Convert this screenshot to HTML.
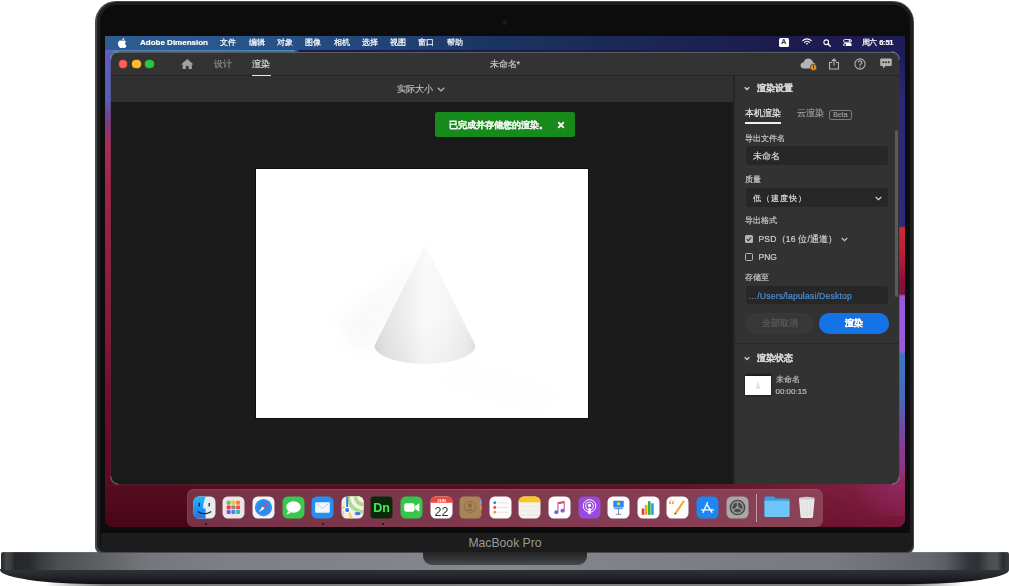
<!DOCTYPE html>
<html><head><meta charset="utf-8">
<style>
*{margin:0;padding:0;box-sizing:border-box}
html,body{width:1009px;height:586px;overflow:hidden;background:#fff;font-family:"Liberation Sans",sans-serif;font-weight:500}
.a{position:absolute}
#lid{left:95px;top:1px;width:819px;height:552px;border-radius:21px 21px 6px 6px;background:#46484b}
#bez{left:99.5px;top:5px;width:810px;height:544px;border-radius:17px 17px 4px 4px;background:#0c0c0c;box-shadow:0 0 0 3px #1e1e1e}
#chin{left:100.5px;top:533px;width:809px;height:18.5px;background:#1c1c1c;border-radius:0 0 6px 6px}
#screen{will-change:transform;-webkit-text-stroke:0.2px;left:105px;top:36px;width:800px;height:491px;background:#3a1a40;overflow:hidden;border-radius:0 0 8px 8px}
#menubar{left:0;top:0;width:800px;height:14px;background:linear-gradient(90deg,#2d5d92 0,#2b5890 100px,#254e84 200px,#1e3c6c 345px,#1b3662 375px,#1b2a58 500px,#1c1c4c 675px,#1e1c58 800px);color:#fff;font-size:8px;line-height:14px}
#win{left:6px;top:16px;width:788px;height:432px;background:#1b1b1b;border-radius:7px;overflow:hidden;box-shadow:0 0 0 0.5px rgba(60,60,70,.6)}
#title{left:0;top:0;width:788px;height:24px;background:#333;border-bottom:1px solid #252525;box-shadow:inset 0 1px 0 rgba(255,255,255,.2)}
#toolbar{left:0;top:24px;width:622px;height:26px;background:#303030}
#canvas{left:0;top:50px;width:622px;height:382px;background:#1a1a1a}
#divider{left:622px;top:24px;width:1.5px;height:408px;background:#262626}
#panel{left:623.5px;top:24px;width:164.5px;height:408px;background:#323232}
#dock{left:82px;top:453px;width:635.5px;height:38px;background:linear-gradient(90deg,#753247,#80394f 50%,#8a4257);border-radius:7px;box-shadow:inset 0 1px 0 rgba(255,200,210,.12),inset 1px 0 0 rgba(255,200,210,.08)}
#base1{left:1px;top:552px;width:1008px;height:18px;box-shadow:inset 0 1px 0 rgba(255,255,255,.1);border-radius:2px 2px 0 0;background:linear-gradient(90deg,#2a2d30 0,#34373a 3px,#45484b 6px,#3a3d40 10px,#25282b 14px,#282b2e 28px,#3a3d40 40px,#4e5154 60px,#5a5d60 90px,#686b6e 120px,#74787c 148px,#7c8084 220px,#85898d 500px,#7b7f83 700px,#777b7f 830px,#6a6e72 900px,#64686c 930px,#5a5e62 945px,#45484c 957px,#33363a 967px,#2e3134 977px,#4a4d50 988px,#505356 996px,#2a2d30 1002px,#3a3d40 1008px)}
#base2{left:0;top:569px;width:1009px;height:14.5px;background:linear-gradient(#30353a,#22262a 50%,#0e1012);border-radius:0 0 100px 100px/0 0 14px 14px}
#shadow{left:45px;top:582px;width:919px;height:4px;background:linear-gradient(90deg,rgba(110,110,110,0),#7a7a7a 60px,#808080 50%,#7a7a7a 859px,rgba(110,110,110,0))}
#notch{left:422.5px;top:552px;width:164px;height:12.5px;background:linear-gradient(#222426,#35373a 60%,#4a4c4f);border-radius:0 0 9px 9px}
#mbp{left:430px;top:536px;width:150px;text-align:center;color:#9a9a9a;font-size:12.2px;line-height:14px}
.mt{top:3px;font-size:8px;line-height:8px;color:#fff;white-space:nowrap}
.b{font-weight:bold}
.tt{top:7.5px;font-size:9px;line-height:9px;white-space:nowrap}
.pt{font-size:9px;line-height:9px;white-space:nowrap}
.lb{font-size:7.5px;line-height:7.5px;color:#c4c4c4;white-space:nowrap}
.inp{left:635px;width:142px;height:19.5px;background:#272727;border-radius:3px}
</style></head><body>
<div id="shadow" class="a"></div>
<div id="base2" class="a"></div>
<div id="base1" class="a"></div>
<div id="lid" class="a"></div>
<div id="bez" class="a"></div>
<div id="chin" class="a"></div>
<div class="a" style="left:502.5px;top:20px;width:4.5px;height:4.5px;border-radius:50%;background:#1c1c1e"></div>
<div id="notch" class="a"></div>
<div id="mbp" class="a">MacBook Pro</div>
<div id="screen" class="a">
  <div class="a" style="left:0;top:14px;width:800px;height:3px;background:linear-gradient(90deg,#5a62bc 0,#5a62bc 6px,#4a80b8 8px,#3d8cc4 185px,#36a0d0 188px,#15154a 195px,#1c1c55 100%)"></div>
  <div class="a" style="left:0;top:16px;width:12px;height:475px;background:linear-gradient(#5a60bc 0,#585cb4 48px,#6a4a98 60px,#843a78 73px,#aa2c58 93px,#a82248 133px,#881636 283px,#700c2c 348px,#600822 433px,#54081c 475px)"></div>
  <div class="a" style="left:788px;top:16px;width:12px;height:475px;background:linear-gradient(#1c1c58 0,#2a2a78 48px,#2c2a7a 174px,#d02a32 176px,#b01c3a 208px,#8a1038 230px,#7a1040 242px,#9a58d8 244px,#9a5ad8 300px,#3a78c0 302px,#4a68b8 348px,#6a50b0 368px,#8a3a90 398px,#9a2a70 438px,#8a1a40 460px,#7a1535 475px)"></div>
  <div class="a" style="left:0;top:440px;width:800px;height:51px;background:linear-gradient(rgba(255,255,255,.04),rgba(0,0,0,.12)),linear-gradient(90deg,#52061a 0,#520619 300px,#620c22 600px,#7a1636 720px,#84183e 800px)"></div>
  <div class="a" style="left:740px;top:440px;width:60px;height:40px;background:radial-gradient(circle at 100% 0,rgba(150,45,110,.8),rgba(150,45,110,0) 75%)"></div>
  <div id="menubar" class="a">
    <svg class="a" style="left:13px;top:2px" width="9" height="10" viewBox="0 0 18 20"><path fill="#fff" d="M12.6 0c.1 1.3-.4 2.5-1.1 3.4-.8.9-1.9 1.5-3.1 1.4-.1-1.2.4-2.5 1.1-3.3C10.3.6 11.6 0 12.6 0zM16.5 6.9c-.2.1-2.3 1.3-2.2 3.9 0 3 2.6 4 2.7 4.1-.1.1-.4 1.4-1.4 2.9-.9 1.3-1.8 2.5-3.2 2.5-1.4 0-1.8-.8-3.4-.8-1.6 0-2.1.8-3.4.9-1.3 0-2.4-1.4-3.3-2.7C.5 15.100-.9 10.600.9 7.500c.9-1.5 2.500-2.500 4.200-2.500 1.300 0 2.600.9 3.400.9.8 0 2.100-1.100 3.600-.9.600 0 2.400.200 3.500 1.800z"/></svg>
    <div class="a mt b" style="left:35px;font-size:8px">Adobe Dimension</div>
    <div class="a mt" style="left:115px">文件</div>
    <div class="a mt" style="left:143.5px">编辑</div>
    <div class="a mt" style="left:171.5px">对象</div>
    <div class="a mt" style="left:200px">图像</div>
    <div class="a mt" style="left:228.5px">相机</div>
    <div class="a mt" style="left:256.5px">选择</div>
    <div class="a mt" style="left:285px">视图</div>
    <div class="a mt" style="left:313px">窗口</div>
    <div class="a mt" style="left:341.5px">帮助</div>
    <div class="a" style="left:674px;top:2px;width:9.5px;height:8.5px;background:#fff;border-radius:1.5px;color:#40405a;font-size:7px;font-weight:bold;line-height:8.5px;text-align:center">A</div>
    <svg class="a" style="left:696.5px;top:2px" width="10" height="7" viewBox="0 0 20 14"><path fill="none" stroke="#fff" stroke-width="2.300" stroke-linecap="round" d="M1.500 5.200a12.500 12.500 0 0 1 17 0M5 8.700a7.500 7.500 0 0 1 10 0"/><path d="M7.600 11.200a3.600 3.600 0 0 1 4.800 0L10 13.600z" fill="#fff"/></svg>
    <svg class="a" style="left:718px;top:3px" width="8" height="8" viewBox="0 0 16 16"><circle cx="6.5" cy="6.5" r="4.7" fill="none" stroke="#fff" stroke-width="2.2"/><path d="M10 10l4.5 4.5" stroke="#fff" stroke-width="2.4" stroke-linecap="round"/></svg>
    <svg class="a" style="left:737.5px;top:2.5px" width="9" height="7.500" viewBox="0 0 18 15"><rect x="1" y="1" width="16" height="5.600" rx="2.800" fill="none" stroke="#fff" stroke-width="1.700"/><circle cx="13.200" cy="3.800" r="1.900" fill="#fff"/><rect x="0.500" y="8.200" width="17" height="6.300" rx="3.150" fill="#fff"/><circle cx="4.300" cy="11.350" r="1.900" fill="#1e1c58"/></svg>
    <div class="a mt" style="left:756.5px;letter-spacing:-0.2px">周六 <span class="b" style="font-size:7.5px">6:51</span></div>
  </div>
  <div id="win" class="a">
    <div id="title" class="a">
      <div class="a" style="left:7.9px;top:7.8px;width:8.4px;height:8.4px;border-radius:50%;background:#fe5f57;box-shadow:0 0 0 .5px #9a3a36"></div>
      <div class="a" style="left:21.3px;top:7.8px;width:8.4px;height:8.4px;border-radius:50%;background:#febc2e;box-shadow:0 0 0 .5px #9a7020"></div>
      <div class="a" style="left:34.2px;top:7.8px;width:8.4px;height:8.4px;border-radius:50%;background:#28c840;box-shadow:0 0 0 .5px #1a7a2a"></div>
      <svg class="a" style="left:69.5px;top:6.8px" width="12.5" height="10" viewBox="0 0 25 20"><path fill="#a0a0a0" d="M12.5 0L0 10.8h3.3V20h6.5v-6.2h5.4V20h6.5v-9.2H25z"/></svg>
      <div class="a tt" style="left:102.5px;color:#8c8c8c">设计</div>
      <div class="a tt" style="left:141px;color:#dcdcdc">渲染</div>
      <div class="a tt" style="left:378.5px;color:#c8c8c8">未命名*</div>
      <svg class="a" style="left:689px;top:6px" width="18" height="13" viewBox="0 0 36 26"><path fill="#b4b4b4" d="M8 21C3.5 21 1 18 1 14.5S3.8 8.300 7.200 8.300C8.500 3.600 12.300 1 16.500 1c5 0 8.800 3.500 9.300 8.200 3.300.3 5.700 2.800 5.700 6 0 3.300-2.700 5.800-6 5.800z"/><circle cx="27" cy="19" r="6.5" fill="#f29423" stroke="#333" stroke-width="1.5"/><rect x="26" y="14.8" width="2" height="5.2" fill="#333"/><rect x="26" y="21.3" width="2" height="1.8" fill="#333"/></svg>
      <svg class="a" style="left:717px;top:5.5px" width="12" height="12" viewBox="0 0 24 24"><path fill="none" stroke="#b4b4b4" stroke-width="2.2" d="M8 9H3v13h18V9h-5M12 15V2M7.5 6.5L12 2l4.5 4.5"/></svg>
      <svg class="a" style="left:743px;top:6px" width="12" height="12" viewBox="0 0 24 24"><circle cx="12" cy="12" r="10.2" fill="none" stroke="#b4b4b4" stroke-width="2.2"/><path fill="none" stroke="#b4b4b4" stroke-width="2.4" d="M8.6 9.2a3.4 3.4 0 1 1 4.600 3.200c-.8.400-1.200 1-1.200 2v.8"/><circle cx="12" cy="18" r="1.4" fill="#b4b4b4"/></svg>
      <svg class="a" style="left:768.5px;top:6px" width="12" height="11" viewBox="0 0 24 22"><path fill="#b4b4b4" d="M2 1h20a1.500 1.500 0 0 1 1.500 1.500v12A1.500 1.500 0 0 1 22 16H11l-5 5v-5H2A1.500 1.500 0 0 1 .5 14.500v-12A1.500 1.500 0 0 1 2 1z"/><circle cx="6.5" cy="8.500" r="2" fill="#333"/><circle cx="12" cy="8.500" r="2" fill="#333"/><circle cx="17.500" cy="8.500" r="2" fill="#333"/></svg>
    </div>
    <div class="a" style="left:141px;top:23px;width:19px;height:2px;background:#e6e6e6"></div>
    <div id="toolbar" class="a">
      <div class="a" style="left:286px;top:8.5px;font-size:9px;line-height:9px;color:#bcbcbc;white-space:nowrap">实际大小</div>
      <svg class="a" style="left:325.5px;top:10.5px" width="8" height="5" viewBox="0 0 16 10"><path d="M1.500 1.500L8 8l6.500-6.500" fill="none" stroke="#bcbcbc" stroke-width="2.200"/></svg>
    </div>
    <div id="canvas" class="a"><div class="a" style="left:83px;top:56px;width:411px;height:326px;background:#1b1b1b"></div></div>
    <svg class="a" style="left:144px;top:116px" width="334" height="251" viewBox="0 0 334 251">
      <defs>
        <linearGradient id="cg" x1="0" x2="1" y1="0" y2="0"><stop offset="0" stop-color="#d8d8d8"/><stop offset="0.1" stop-color="#e4e4e4"/><stop offset="0.3" stop-color="#eeeeee"/><stop offset="0.5" stop-color="#fafafa"/><stop offset="0.7" stop-color="#f6f6f6"/><stop offset="0.9" stop-color="#eeeeee"/><stop offset="1" stop-color="#e2e2e2"/></linearGradient><linearGradient id="cv" x1="0" x2="0" y1="0" y2="1"><stop offset="0.6" stop-color="#000" stop-opacity="0"/><stop offset="1" stop-color="#000" stop-opacity="0.03"/></linearGradient>
        <radialGradient id="sh1" cx="0.5" cy="0.5" r="0.5"><stop offset="0" stop-color="#000" stop-opacity="0.06"/><stop offset="1" stop-color="#000" stop-opacity="0"/></radialGradient>
        <filter id="bl" x="-50%" y="-50%" width="200%" height="200%"><feGaussianBlur stdDeviation="7"/></filter>
      </defs>
      <rect x="0" y="0" width="334" height="251" fill="#0f0f0f"/>
      <rect x="1" y="1" width="332" height="249" fill="#fff"/>
      <g filter="url(#bl)" opacity="0.1"><path d="M166 88 L85 150 L92 178 L122 180 Z" fill="#c8c8c8"/><path d="M205 200 L300 225 L285 240 L190 212 Z" fill="#e8e8e8"/></g>
      <path d="M170 77 L119.500 177.500 A50.500 18.500 0 0 0 220.500 177.500 Z" fill="url(#cg)"/><path d="M170 77 L119.500 177.500 A50.500 18.500 0 0 0 220.500 177.500 Z" fill="url(#cv)"/>
    </svg>
    <div class="a" style="left:324px;top:59.7px;width:140px;height:25.7px;background:#178a1b;border-radius:2.5px">
      <div class="a" style="left:13.5px;top:9.5px;font-size:8.8px;line-height:8.8px;color:#eef7ee;white-space:nowrap;font-weight:700">已完成并存储您的渲染。</div>
      <svg class="a" style="left:122px;top:9.2px" width="8" height="8" viewBox="0 0 16 16"><path d="M2.500 2.500l11 11M13.500 2.500l-11 11" stroke="#f4f4f4" stroke-width="3.600"/></svg>
    </div>
    <div id="divider" class="a"></div>
    <div id="panel" class="a"></div>
    <div class="a" style="left:784px;top:78px;width:3px;height:167px;background:#5a5a5a;border-radius:1.5px"></div>
    <svg class="a" style="left:633px;top:34px" width="6" height="5" viewBox="0 0 12 10"><path d="M1.500 2.500L6 7l4.500-4.500" fill="none" stroke="#d0d0d0" stroke-width="2.700"/></svg>
    <div class="a pt b" style="left:645.5px;top:32px;color:#d4d4d4">渲染设置</div>
    <div class="a pt" style="left:634px;top:57px;color:#ececec">本机渲染</div>
    <div class="a" style="left:634px;top:70px;width:36px;height:2px;background:#efefef"></div>
    <div class="a pt" style="left:686px;top:57px;color:#9a9a9a">云渲染</div>
    <div class="a" style="left:718px;top:57.5px;width:23px;height:10px;border:1px solid #7a7a7a;border-radius:2px;color:#9a9a9a;font-size:7px;line-height:8px;text-align:center">Beta</div>
    <div class="a lb" style="left:633.5px;top:82.5px">导出文件名</div>
    <div class="a inp" style="top:93.5px"><div class="a" style="left:7px;top:6px;font-size:9px;line-height:9px;color:#d8d8d8">未命名</div></div>
    <div class="a lb" style="left:633.5px;top:124px">质量</div>
    <div class="a inp" style="top:135.5px"><div class="a" style="left:7px;top:6.8px;font-size:8.3px;line-height:8.3px;color:#d8d8d8;white-space:nowrap;letter-spacing:1.1px">低（速度快）</div>
      <svg class="a" style="left:128.5px;top:8.5px" width="7" height="5" viewBox="0 0 14 10"><path d="M1.500 2L7 7.500 12.500 2" fill="none" stroke="#d8d8d8" stroke-width="2.200"/></svg></div>
    <div class="a lb" style="left:633.5px;top:165px">导出格式</div>
    <div class="a" style="left:634px;top:182.5px;width:8px;height:8px;background:#b4b4b4;border-radius:1.5px"></div>
    <svg class="a" style="left:634px;top:182.5px" width="8" height="8" viewBox="0 0 16 16"><path d="M3.500 8.200l3 3 6-6.500" fill="none" stroke="#323232" stroke-width="2.200"/></svg>
    <div class="a" style="left:647.5px;top:183px;font-size:8.5px;line-height:8.5px;color:#cfcfcf;white-space:nowrap;letter-spacing:0.2px">PSD（16 位/通道）</div>
    <svg class="a" style="left:730px;top:185px" width="7" height="5" viewBox="0 0 14 10"><path d="M1.500 2L7 7.500 12.500 2" fill="none" stroke="#c8c8c8" stroke-width="2.200"/></svg>
    <div class="a" style="left:634px;top:200.5px;width:8px;height:8px;border:1.3px solid #b4b4b4;border-radius:1.5px"></div>
    <div class="a" style="left:647.5px;top:200.5px;font-size:8.5px;line-height:8.5px;color:#cfcfcf">PNG</div>
    <div class="a lb" style="left:633.5px;top:222px">存储至</div>
    <div class="a inp" style="top:234px;height:17.5px"><div class="a" style="left:2.5px;top:5.5px;font-size:8.6px;line-height:8.6px;color:#4a90d9;white-space:nowrap;letter-spacing:0.19px"><span style="color:#8a8a8a">…</span>/Users/lapulasi/Desktop</div></div>
    <div class="a" style="left:634px;top:261px;width:69px;height:20.5px;border-radius:10px;background:#383838;color:#5c5c5c;font-size:8.6px;line-height:20.5px;text-align:center">全部取消</div>
    <div class="a" style="left:708px;top:261px;width:70px;height:20.5px;border-radius:10px;background:#1473e6;color:#fff;font-size:8.6px;line-height:21.5px;text-align:center;font-weight:bold">渲染</div>
    <div class="a" style="left:624px;top:291px;width:164px;height:1px;background:#272727"></div>
    <svg class="a" style="left:633px;top:304px" width="6" height="5" viewBox="0 0 12 10"><path d="M1.500 2.500L6 7l4.500-4.500" fill="none" stroke="#d0d0d0" stroke-width="2.700"/></svg>
    <div class="a pt b" style="left:645.5px;top:301.5px;color:#d4d4d4">渲染状态</div>
    <div class="a" style="left:634px;top:321.5px;width:26px;height:21.5px;background:#fff;border-top:2px solid #1e1e1e;box-shadow:0 1px 2px rgba(0,0,0,.5)"></div>
    <svg class="a" style="left:642px;top:327px" width="10" height="12" viewBox="0 0 10 12"><path d="M5 2L2.500 10h5z" fill="#e4e4e4"/></svg>
    <div class="a" style="left:664.5px;top:324px;font-size:7.7px;line-height:7.7px;color:#bcbcbc">未命名</div>
    <div class="a" style="left:664.5px;top:335.5px;font-size:8px;line-height:8px;color:#bcbcbc">00:00:15</div>
  </div>
  <svg class="a" style="left:0;top:0" width="800" height="491"><path d="M5.800 440.500A7.500 7.500 0 0 0 13.300 448.200M786.700 448.200A7.500 7.500 0 0 0 794.200 440.500M5.800 23.500A7.500 7.500 0 0 1 13.300 15.800M786.700 15.800A7.500 7.500 0 0 1 794.200 23.500" fill="none" stroke="rgba(255,255,255,.4)" stroke-width="1"/></svg>
  <div id="dock" class="a"><svg class="a" style="left:5.7px;top:6.8px" width="23" height="23" viewBox="0 0 44 44"><defs><clipPath id="fc"><rect x="1" y="1" width="42" height="42" rx="10"/></clipPath></defs><g clip-path="url(#fc)"><rect x="0" y="0" width="44" height="44" fill="#e6ebf0"/><defs><linearGradient id="fg" x1="0" y1="0" x2="0" y2="1"><stop offset="0" stop-color="#22b8f8"/><stop offset="1" stop-color="#1a74e8"/></linearGradient></defs><path d="M0 0h25c-4 8-6 16-5.500 24H24v20H0z" fill="url(#fg)"/><path d="M12 14v5M31 14v5" stroke="#1a1a2a" stroke-width="2.400" stroke-linecap="round"/><path d="M10 30c7 5 17 5 24 0" fill="none" stroke="#1a1a2a" stroke-width="2.200" stroke-linecap="round"/></g></svg><svg class="a" style="left:35.3px;top:6.8px" width="23" height="23" viewBox="0 0 44 44"><rect x="1" y="1" width="42" height="42" rx="10" fill="#ece4e6"/><rect x="9" y="9" width="7.500" height="7.500" rx="1.800" fill="#5ac85a"/><rect x="18" y="9" width="7.500" height="7.500" rx="1.800" fill="#f5c030"/><rect x="27" y="9" width="7.500" height="7.500" rx="1.800" fill="#f08a30"/><rect x="9" y="18" width="7.500" height="7.500" rx="1.800" fill="#e04040"/><rect x="18" y="18" width="7.500" height="7.500" rx="1.800" fill="#8a8a8a"/><rect x="27" y="18" width="7.500" height="7.500" rx="1.800" fill="#f04a6a"/><rect x="9" y="27" width="7.500" height="7.500" rx="1.800" fill="#8a4ae0"/><rect x="18" y="27" width="7.500" height="7.500" rx="1.800" fill="#3a8af0"/><rect x="27" y="27" width="7.500" height="7.500" rx="1.800" fill="#30c0a0"/></svg><svg class="a" style="left:64.9px;top:6.8px" width="23" height="23" viewBox="0 0 44 44"><rect x="1" y="1" width="42" height="42" rx="10" fill="#f4f4f6"/><circle cx="22" cy="22" r="16.500" fill="#2a8af0"/><circle cx="22" cy="22" r="14" fill="none" stroke="#fff" stroke-width="0.800" stroke-dasharray="1 2" opacity="0.7"/><path d="M31 13L24 24 20 20z" fill="#f04040"/><path d="M13 31L20 20 24 24z" fill="#fff"/></svg><svg class="a" style="left:94.5px;top:6.8px" width="23" height="23" viewBox="0 0 44 44"><rect x="1" y="1" width="42" height="42" rx="10" fill="#3cc84e"/><ellipse cx="22" cy="21" rx="14" ry="11" fill="#fff"/><path d="M11 29c0 3-2 5-3 6 4 0 7-2 9-4z" fill="#fff"/></svg><svg class="a" style="left:124.1px;top:6.8px" width="23" height="23" viewBox="0 0 44 44"><rect x="1" y="1" width="42" height="42" rx="10" fill="#2490f2"/><rect x="8" y="12" width="28" height="20" rx="2" fill="#f2f6fa"/><path d="M8.500 13L22 24 35.500 13" fill="none" stroke="#b8c8d8" stroke-width="1.600"/></svg><svg class="a" style="left:153.7px;top:6.8px" width="23" height="23" viewBox="0 0 44 44"><defs><clipPath id="mc"><rect x="1" y="1" width="42" height="42" rx="10"/></clipPath></defs><g clip-path="url(#mc)"><rect width="44" height="44" fill="#f2eee6"/><circle cx="44" cy="0" r="34" fill="#a8dc88"/><circle cx="44" cy="0" r="27" fill="#f4f2ea"/><circle cx="44" cy="0" r="20" fill="#a8dc88"/><circle cx="44" cy="0" r="13" fill="#f4f2ea"/><path d="M0 20c10 2 16 8 20 24" fill="none" stroke="#f5d040" stroke-width="4"/><path d="M0 30h10M4 30v14" stroke="#f4c0c8" stroke-width="3"/><rect x="10" y="0" width="3.500" height="26" fill="#2a7af0"/><circle cx="11.800" cy="27" r="5" fill="#2a7af0" stroke="#fff" stroke-width="2.200"/><rect x="26" y="30" width="12" height="7" rx="3.500" fill="#3a78e0" stroke="#fff" stroke-width="1"/></g></svg><svg class="a" style="left:183.3px;top:6.8px" width="23" height="23" viewBox="0 0 44 44"><rect x="1" y="1" width="42" height="42" rx="6" fill="#0b2a0c"/><text x="22" y="31" text-anchor="middle" font-family="Liberation Sans" font-weight="bold" font-size="24" fill="#46ec5e">Dn</text></svg><svg class="a" style="left:212.9px;top:6.8px" width="23" height="23" viewBox="0 0 44 44"><rect x="1" y="1" width="42" height="42" rx="10" fill="#34c84a"/><rect x="8" y="14" width="20" height="16" rx="4" fill="#fff"/><path d="M29 19l8-5v16l-8-5z" fill="#fff"/></svg><svg class="a" style="left:242.5px;top:6.8px" width="23" height="23" viewBox="0 0 44 44"><rect x="1" y="1" width="42" height="42" rx="10" fill="#fff"/><path d="M1 11V10a9 9 0 0 1 9-9h24a9 9 0 0 1 9 9v1z" fill="#f04a40"/><rect x="1" y="9" width="42" height="4" fill="#f04a40"/><text x="22" y="11" text-anchor="middle" font-family="Liberation Sans" font-size="8" font-weight="bold" fill="#fff">JUN</text><text x="22" y="39" text-anchor="middle" font-family="Liberation Sans" font-size="24" fill="#333">22</text></svg><svg class="a" style="left:272.1px;top:6.8px" width="23" height="23" viewBox="0 0 44 44"><rect x="1" y="1" width="42" height="42" rx="8" fill="#a88458"/><rect x="40" y="8" width="3" height="8" fill="#8aa0d0"/><rect x="40" y="18" width="3" height="8" fill="#e0a040"/><circle cx="21" cy="21" r="11" fill="none" stroke="#8a6a40" stroke-width="1.500"/><circle cx="21" cy="18" r="4" fill="#8a6a40"/><path d="M14 28c2-4 12-4 14 0" fill="#8a6a40"/></svg><svg class="a" style="left:301.7px;top:6.8px" width="23" height="23" viewBox="0 0 44 44"><rect x="1" y="1" width="42" height="42" rx="10" fill="#fcfcfc"/><circle cx="11" cy="13" r="2.800" fill="#2a8af0"/><circle cx="11" cy="22" r="2.800" fill="#f04a3a"/><circle cx="11" cy="31" r="2.800" fill="#f0a030"/><path d="M17 13h20M17 22h20M17 31h20" stroke="#d8d8d8" stroke-width="1.300"/></svg><svg class="a" style="left:331.3px;top:6.8px" width="23" height="23" viewBox="0 0 44 44"><defs><clipPath id="nc"><rect x="1" y="1" width="42" height="42" rx="10"/></clipPath></defs><g clip-path="url(#nc)"><rect width="44" height="44" fill="#f4f2ea"/><rect width="44" height="12" fill="#f8c820"/><path d="M4 20h36M4 28h36M4 36h36" stroke="#ddd" stroke-width="0.800"/></g></svg><svg class="a" style="left:360.9px;top:6.8px" width="23" height="23" viewBox="0 0 44 44"><rect x="1" y="1" width="42" height="42" rx="10" fill="#fff"/><defs><linearGradient id="mg" x1="0" y1="0" x2="0" y2="1"><stop offset="0" stop-color="#f04a5a"/><stop offset="1" stop-color="#7a5af0"/></linearGradient></defs><path d="M18 12l14-3v19a4 3.500 0 1 1-2-3V14l-10 2v15a4 3.500 0 1 1-2-3z" fill="url(#mg)"/></svg><svg class="a" style="left:390.5px;top:6.8px" width="23" height="23" viewBox="0 0 44 44"><rect x="1" y="1" width="42" height="42" rx="10" fill="#9a4ae0"/><circle cx="22" cy="19" r="12" fill="none" stroke="#fff" stroke-width="1.800"/><circle cx="22" cy="19" r="7.500" fill="none" stroke="#fff" stroke-width="1.800"/><circle cx="22" cy="18" r="3" fill="#fff"/><rect x="19.500" y="23" width="5" height="12" rx="2.500" fill="#fff"/></svg><svg class="a" style="left:420.1px;top:6.8px" width="23" height="23" viewBox="0 0 44 44"><rect x="1" y="1" width="42" height="42" rx="10" fill="#fcfcfc"/><rect x="12" y="9" width="20" height="13" rx="1" fill="#2a8af0"/><circle cx="22" cy="15" r="3.500" fill="#f0c040"/><path d="M22 22v13M17 35h10" stroke="#7a8aa0" stroke-width="1.800"/><path d="M14 24h16" stroke="#4a9af0" stroke-width="2.500"/></svg><svg class="a" style="left:449.7px;top:6.8px" width="23" height="23" viewBox="0 0 44 44"><rect x="1" y="1" width="42" height="42" rx="10" fill="#fcfcfc"/><rect x="9" y="24" width="5" height="12" fill="#e03a3a"/><rect x="15" y="17" width="5" height="19" fill="#f5a020"/><rect x="21" y="10" width="5" height="26" fill="#30b040"/><rect x="27" y="14" width="5" height="22" fill="#2a9af0"/></svg><svg class="a" style="left:479.3px;top:6.8px" width="23" height="23" viewBox="0 0 44 44"><rect x="1" y="1" width="42" height="42" rx="10" fill="#fcfcfc"/><path d="M33 8l3 2-16 24-4 2 1-4z" fill="#f5a020"/><path d="M16 36l1-4 3 2z" fill="#333"/><text x="5" y="25" font-family="Liberation Serif" font-weight="bold" font-size="24" fill="#f5a020">“</text></svg><svg class="a" style="left:508.9px;top:6.8px" width="23" height="23" viewBox="0 0 44 44"><rect x="1" y="1" width="42" height="42" rx="10" fill="#1e86f0"/><path d="M13.500 31.500L22 12.500M22 12.500l0 0M20.500 15.500L30.500 31.500M10.500 26.500h23" stroke="#fff" stroke-width="2.600" stroke-linecap="round"/></svg><svg class="a" style="left:538.5px;top:6.8px" width="23" height="23" viewBox="0 0 44 44"><rect x="1" y="1" width="42" height="42" rx="10" fill="#a8a8a8"/><circle cx="22" cy="22" r="15" fill="#4a4a4a"/><circle cx="22" cy="22" r="11" fill="none" stroke="#9a9a9a" stroke-width="2.500"/><circle cx="22" cy="22" r="3" fill="#9a9a9a"/><path d="M22 11v8M12.500 27.500l7-4M31.500 27.500l-7-4" stroke="#9a9a9a" stroke-width="2.400"/></svg><div class="a" style="left:569px;top:5px;width:1px;height:28px;background:rgba(255,220,225,.55)"></div><svg class="a" style="left:576px;top:5px" width="28" height="24.500" viewBox="0 0 55 48"><path d="M3 8a3 3 0 0 1 3-3h15l4 4h24a3 3 0 0 1 3 3v30a3 3 0 0 1-3 3H6a3 3 0 0 1-3-3z" fill="#3a9ee0"/><path d="M3 13h49v29a3 3 0 0 1-3 3H6a3 3 0 0 1-3-3z" fill="#6ec6f8"/></svg><svg class="a" style="left:610px;top:7px" width="19.500" height="23" viewBox="0 0 36 44"><ellipse cx="18" cy="5" rx="15" ry="3.500" fill="#c8c8c8"/><path d="M3 5l3 34a3 3 0 0 0 3 3h18a3 3 0 0 0 3-3l3-34c-2 3-26 3-30 0z" fill="#e8e8e8"/><path d="M10 10l2 28M18 10v29M26 10l-2 28" stroke="#d0d0d0" stroke-width="0.800"/></svg><div class="a" style="left:17.5px;top:34px;width:2px;height:2px;border-radius:50%;background:#1a0a10"></div><div class="a" style="left:135px;top:34px;width:2px;height:2px;border-radius:50%;background:#1a0a10"></div><div class="a" style="left:194.5px;top:34px;width:2px;height:2px;border-radius:50%;background:#1a0a10"></div></div>
</div>
</body></html>
